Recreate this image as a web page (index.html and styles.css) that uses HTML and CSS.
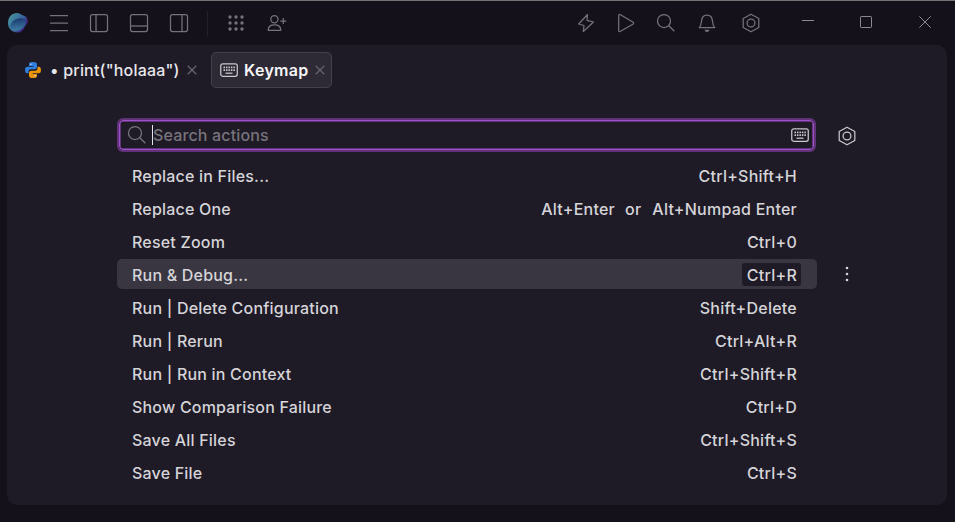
FILE: index.html
```html
<!DOCTYPE html>
<html lang="en">
<head>
<meta charset="utf-8">
<title>Keymap</title>
<link rel="stylesheet" href="styles.css">
</head>
<body>
<svg class="defs" width="0" height="0">
  <symbol id="gear" viewBox="0 0 20 20"><path d="M10 1.2 17.8 5.5v9L10 18.8 2.2 14.5v-9z"/><circle cx="10" cy="10" r="3.9"/></symbol>
  <symbol id="search" viewBox="0 0 20 20"><circle cx="8" cy="8" r="6.5"/><path d="m12.800 12.800 5.500 5.500"/></symbol>
  <symbol id="close" viewBox="0 0 10 10"><path d="m.7.7 8.6 8.6M9.3.7.7 9.3"/></symbol>
  <symbol id="keyboard" viewBox="0 0 18 14"><rect x=".75" y=".75" width="16.5" height="12.5" rx="2"/><path d="M3.5 4.400h11.400M3.500 7.100h11.400" stroke-width="1.6" stroke-dasharray="1.5 .97"/><path d="M5.5 10.200h7"/></symbol>
</svg>
<header class="titlebar">
  <svg class="logo" viewBox="0 0 20 20">
    <defs>
      <linearGradient id="rim" x1="0" y1="0" x2="1" y2=".6"><stop offset="0" stop-color="#4b9a9d"/><stop offset=".6" stop-color="#386b9b"/><stop offset="1" stop-color="#42147e"/></linearGradient>
      <linearGradient id="bowl" x1=".1" y1="1" x2=".8" y2="0"><stop offset="0" stop-color="#4386a8"/><stop offset="1" stop-color="#18356f"/></linearGradient>
    </defs>
    <path fill="url(#rim)" d="M9 0c3 0 4 2 6.500 2.500C19 3.500 20.500 7 19.500 10c-1 2-2 2-2.500 4-1.500 3.500-4 5.500-7.500 5.500C4 19.500 0 15.500 0 10 0 4 4 0 9 0z"/>
    <ellipse fill="url(#bowl)" cx="10" cy="11.500" rx="8.200" ry="5.600" transform="rotate(-28 10 11.500)"/>
  </svg>
  <nav class="tools">
    <svg class="icon" viewBox="0 0 20 20"><path d="M1 2.500h18M1 10h18M1 17.500h18"/></svg>
    <svg class="icon" viewBox="0 0 20 20"><rect x="1.500" y="1.500" width="17" height="17" rx="2"/><path d="M7 1.500v17"/></svg>
    <svg class="icon" viewBox="0 0 20 20"><rect x="1.500" y="1.500" width="17" height="17" rx="2"/><path d="M1.500 13h17"/></svg>
    <svg class="icon" viewBox="0 0 20 20"><rect x="1.500" y="1.500" width="17" height="17" rx="2"/><path d="M13 1.500v17"/></svg>
  </nav>
  <span class="divider"></span>
  <nav class="tools extra">
    <svg class="icon solid" viewBox="0 0 20 20"><circle cx="4" cy="4" r="1.700"/><circle cx="10" cy="4" r="1.700"/><circle cx="16" cy="4" r="1.700"/><circle cx="4" cy="10" r="1.700"/><circle cx="10" cy="10" r="1.700"/><circle cx="16" cy="10" r="1.700"/><circle cx="4" cy="16" r="1.700"/><circle cx="10" cy="16" r="1.700"/><circle cx="16" cy="16" r="1.700"/></svg>
    <svg class="icon" viewBox="0 0 20 20"><circle cx="7.400" cy="6.200" r="3.600"/><path d="M1.200 17.300c0-3.700 2.300-5.300 6.300-5.300s6.300 1.600 6.300 5.300zM16.300 5v6M13.300 8h6"/></svg>
  </nav>
  <div class="actions">
    <svg class="icon" viewBox="0 0 20 20"><path d="M11.500 1.500 2.700 11l5.300 1.500-.7 6L17.500 9 11 7.300z"/></svg>
    <svg class="icon" viewBox="0 0 20 20"><path d="M2.700 2.800v14.400q0 2 1.800 1.100l12.300-7q1.700-1.200 0-2.300L4.500 1.700q-1.800-1-1.800 1.100z"/></svg>
    <svg class="icon"><use href="#search"/></svg>
    <svg class="icon bell" viewBox="0 0 20 20"><path d="M2.300 14.700h15.400c-1.700-2-2-3.700-2.300-7C15.100 3.800 13 2 10 2S4.900 3.800 4.600 7.700c-.3 3.300-.6 5-2.300 7z"/><path class="solid" d="M7.500 16.700h5Q12 19 10 19t-2.500-2.300z"/></svg>
    <svg class="icon settings"><use href="#gear"/></svg>
  </div>
  <div class="window-controls">
    <svg viewBox="0 0 12 12"><path d="M0 4.500h12"/></svg>
    <svg viewBox="0 0 12 12"><rect x=".5" y=".5" width="11" height="11" rx=".7"/></svg>
    <svg viewBox="0 0 12 12"><path d="m.3.300 11.400 11.400M11.700.300.300 11.700"/></svg>
  </div>
</header>
<main class="panel">
  <div class="tabs">
    <div class="tab file">
      <svg class="python" viewBox="0 0 16 16"><path fill="#2f7fe0" d="M7.800 0C5 0 4 .8 4 2.300V4h4.300v.7H2.200C.7 4.700 0 6 0 8s.8 3.300 2 3.300h1.500V9.500c0-1.300 1-2.200 2.300-2.200h4c1.200 0 2.200-.9 2.200-2.200V2.300C12 .8 10.700 0 7.800 0z"/><path fill="#e99508" d="M8.200 16c2.800 0 3.800-.8 3.800-2.300V12H7.700v-.7h6.100C15.300 11.300 16 10 16 8s-.8-3.300-2-3.300h-1.500v1.800c0 1.300-1 2.200-2.300 2.200h-4C5 8.700 4 9.600 4 10.900v2.800C4 15.200 5.300 16 8.200 16z"/><circle cx="5.900" cy="2.300" r=".7" fill="#ddd"/><circle cx="10.100" cy="13.700" r=".7" fill="#ddd"/></svg>
      <span>• print("holaaa")</span>
      <svg class="close"><use href="#close"/></svg>
    </div>
    <div class="tab active">
      <svg class="keyboard"><use href="#keyboard"/></svg>
      <span>Keymap</span>
      <svg class="close"><use href="#close"/></svg>
    </div>
  </div>
  <section class="keymap">
    <div class="search-line">
      <div class="search-box">
        <svg class="icon"><use href="#search"/></svg>
        <span class="caret"></span>
        <span class="placeholder">Search actions</span>
        <svg class="keyboard"><use href="#keyboard"/></svg>
      </div>
      <svg class="icon bright"><use href="#gear"/></svg>
    </div>
    <ul class="rows">
      <li><span>Replace in Files...</span><kbd>Ctrl+Shift+H</kbd></li>
      <li><span>Replace One</span><kbd>Alt+Enter<span class="or">or</span>Alt+Numpad Enter</kbd></li>
      <li><span>Reset Zoom</span><kbd>Ctrl+0</kbd></li>
      <li class="selected"><span>Run &amp; Debug...</span><kbd>Ctrl+R</kbd>
        <svg class="more" viewBox="0 0 4 16"><circle cx="2" cy="2" r="1.300"/><circle cx="2" cy="8" r="1.300"/><circle cx="2" cy="14" r="1.300"/></svg></li>
      <li><span>Run | Delete Configuration</span><kbd>Shift+Delete</kbd></li>
      <li><span>Run | Rerun</span><kbd>Ctrl+Alt+R</kbd></li>
      <li><span>Run | Run in Context</span><kbd>Ctrl+Shift+R</kbd></li>
      <li><span>Show Comparison Failure</span><kbd>Ctrl+D</kbd></li>
      <li><span>Save All Files</span><kbd>Ctrl+Shift+S</kbd></li>
      <li><span>Save File</span><kbd>Ctrl+S</kbd></li>
    </ul>
  </section>
</main>
</body>
</html>
```
FILE: styles.css
```css
* { box-sizing: border-box; }
body {
  margin: 0;
  height: 522px;
  overflow: hidden;
  background: #14111a;
  color: #d5d4d8;
  font: 500 16px/20px Inter, "Liberation Sans", sans-serif;
  letter-spacing: .2px;
}
svg { display: block; flex: none; fill: none; stroke: currentColor; stroke-width: 1.25; stroke-linejoin: round; }
.defs { position: absolute; }
.titlebar {
  display: flex;
  align-items: center;
  height: 45px;
  padding: 0 24px 0 8px;
  border-top: 1px solid #747474;
  color: #75727a;
}
.logo { width: 20px; height: 20px; stroke: none; }
.icon { width: 20px; height: 20px; }
.solid { fill: currentColor; stroke: none; }
.tools { display: flex; gap: 20px; margin-left: 21px; }
.divider { width: 1px; height: 25px; margin-left: 18px; background: #24212a; }
.extra { margin-left: 18px; gap: 21px; }
.actions { display: flex; gap: 20px; margin-left: auto; }
.bell { margin-left: 1px; }
.settings { margin-left: 4px; }
.window-controls { display: flex; gap: 46px; margin-left: 41px; color: #8b888e; }
.window-controls svg { width: 12px; height: 12px; stroke-width: 1; position: relative; top: -1px; }
.window-controls svg:last-child { margin-left: 1px; }
.panel {
  width: 940px;
  height: 460px;
  margin-left: 7px;
  padding-top: 7px;
  border-radius: 10px;
  background: #1e1a26;
}
.tabs { display: flex; height: 36px; }
.tab { display: flex; align-items: center; color: #e8e7eb; white-space: nowrap; }
.file { width: 204px; padding-left: 18px; }
.file span { width: 130px; margin-left: 9px; }
.python { width: 16px; height: 16px; stroke: none; }
.close { width: 10px; height: 10px; margin-left: 7px; color: #67636e; }
.active {
  width: 121px;
  padding-left: 8px;
  border: 1px solid #45414c;
  border-radius: 5px;
  background: #2d2935;
  color: #f7f6f8;
  font-weight: 600;
  letter-spacing: .3px;
}
.active span { width: 65px; margin-left: 6px; }
.active .close { margin-left: 6px; }
.keyboard { width: 18px; height: 14px; color: #c9c8cc; }
.keymap { width: 760px; margin: 32px 0 0 110px; }
.search-line { display: flex; align-items: center; gap: 23px; height: 30px; }
.search-box {
  display: flex;
  align-items: center;
  width: 695px;
  height: 30px;
  margin-left: 2px;
  padding: 0 4px 0 7px;
  border: 1px solid #a04fca;
  border-radius: 4px;
  box-shadow: 0 0 0 2px #603378, inset 0 0 0 .5px #a04fca;
  color: #77747c;
}
.search-box .keyboard { margin-left: auto; }
.placeholder { letter-spacing: .15px; }
.caret { width: 1px; height: 20px; margin-left: 5px; background: #e4e3e5; }
.bright { position: relative; top: 1px; color: #c9c8cc; }
.rows { margin: 10px 0 0; padding: 0; list-style: none; }
.rows li { position: relative; display: flex; align-items: center; justify-content: space-between; width: 700px; height: 30px; margin-bottom: 3px; padding: 0 16px 0 15px; border-radius: 5px; }
.rows li > span { position: relative; top: .5px; }
kbd { padding: 2px 4px 1px 5px; border-radius: 3px; font: inherit; letter-spacing: .24px; }
.or { margin: 0 11px 0 10px; }
.rows .selected { background: #393641; }
.selected kbd { background: #1e1a26; }
.more { position: absolute; left: 728px; top: 7px; width: 4px; height: 16px; fill: #d5d4d8; stroke: none; }
```
